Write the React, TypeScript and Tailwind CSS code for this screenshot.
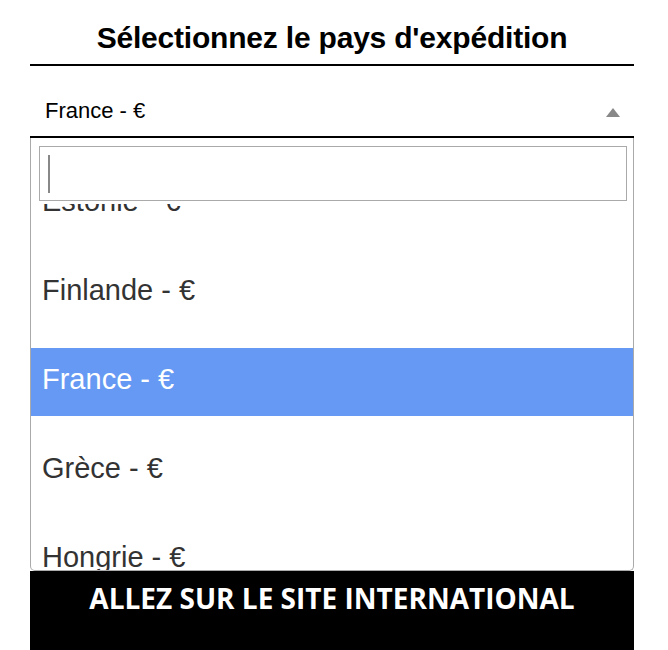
import React from 'react';

const options = ['Estonie - €', 'Finlande - €', 'France - €', 'Grèce - €', 'Hongrie - €'];

export default function App() {
  const selected = 'France - €';

  return (
    <div className="w-[668px] h-[650px] overflow-hidden bg-white font-['Liberation_Sans',Arial,sans-serif]">
      <div className="mx-[30px] w-[604px]">
        {/* Title */}
        <div className="pt-[22px] pb-[10px] border-b-2 border-black text-center">
          <h1 className="text-[30px] leading-[32px] font-bold text-black tracking-[-0.2px]">Sélectionnez le pays d'expédition</h1>
        </div>

        {/* Selected value */}
        <div className="flex items-center justify-between pl-[15px] pr-[14px] pt-[33px] pb-[13px]">
          <span className="text-[22px] leading-[24px] text-black">{selected}</span>
          <svg width="14" height="9" viewBox="0 0 14 9" className="mt-[2px]">
            <polygon points="7,0 14,9 0,9" fill="#888" />
          </svg>
        </div>

        {/* Dropdown */}
        <div className="border-t-2 border-black">
          <div className="border-x border-b border-[#aaa] rounded-b-[5px] bg-white">
            <div className="pl-[8px] pr-[6px] pt-[8px]">
              <div className="h-[55px] border-[1.5px] border-[#aaa] flex items-center pl-[8px]">
                <div className="w-[2px] h-[38px] bg-[#888]" />
              </div>
            </div>
            <div className="mt-[3px] h-[366px] overflow-hidden">
              <ul className="-mt-[34px]">
                {options.map(o => (
                  <li
                    key={o}
                    className={`h-[68px] mb-[21px] flex items-center pl-[11px] pb-[5px] text-[29px] ${o === selected ? 'bg-[#6699f3] text-white' : 'text-[#333]'}`}
                  >
                    {o}
                  </li>
                ))}
              </ul>
            </div>
          </div>
        </div>

        {/* International button */}
        <div className="bg-black h-[90px] pt-[10px] text-center">
          <span className="font-['Open_Sans',sans-serif] font-bold text-[28px] leading-[34px] text-white">
            ALLEZ SUR LE SITE INTERNATIONAL
          </span>
        </div>
      </div>
    </div>
  );
}
